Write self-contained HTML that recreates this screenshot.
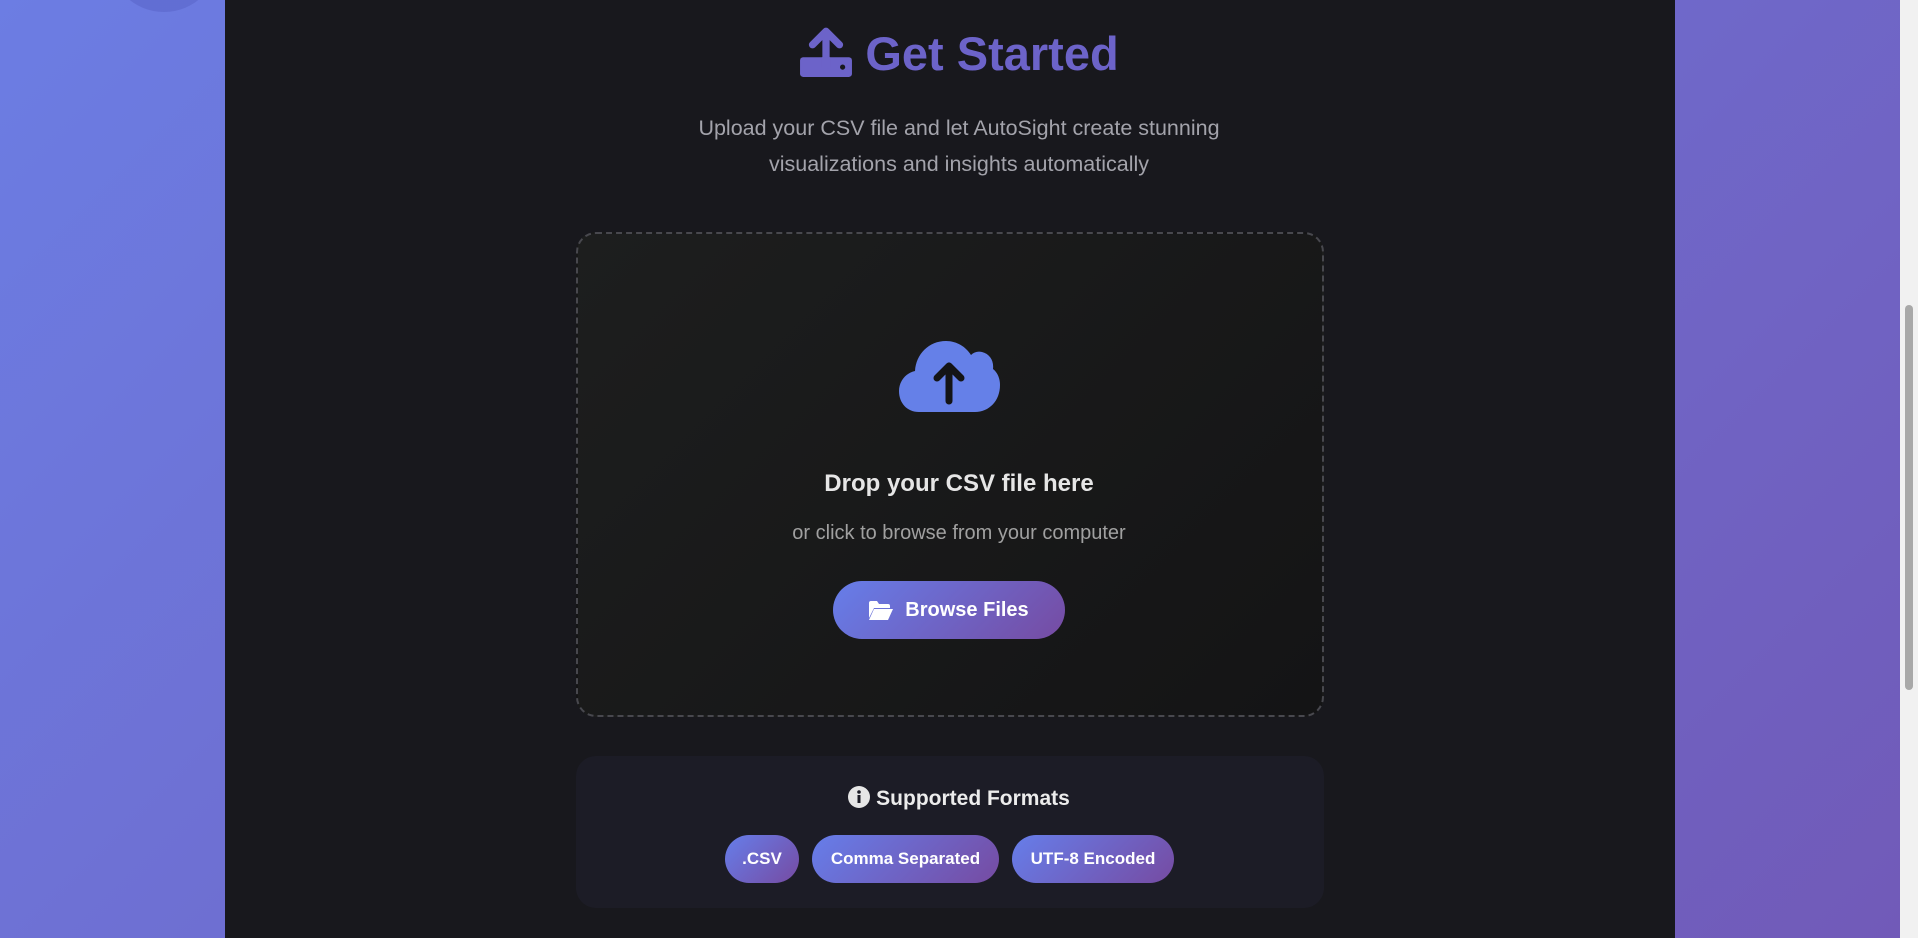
<!DOCTYPE html>
<html><head><meta charset="utf-8"><style>
*{margin:0;padding:0;box-sizing:border-box}
html,body{width:1918px;height:938px;overflow:hidden;font-family:"Liberation Sans","DejaVu Sans",sans-serif}
body{background:linear-gradient(135deg,#6c7de3 0%,#715ab8 100%);position:relative}
.circ{position:absolute;left:109px;top:-98px;width:110px;height:110px;border-radius:50%;background:rgba(90,100,200,.55)}
.card{position:absolute;left:225px;top:0;width:1450px;height:938px;background:#18181d}
.sb{position:absolute;left:1900px;top:0;width:18px;height:938px;background:#f1f1f1}
.sb i{position:absolute;left:5px;top:305px;width:8px;height:385px;border-radius:4px;background:#a8a8a8}
.title{position:absolute;left:0;width:1918px;top:22px;text-align:center;color:#6c63c9;font-weight:bold;font-size:47px;line-height:64px}
.title svg{vertical-align:-8px;margin-right:12px}
.sub{position:absolute;left:0;width:1918px;top:110px;text-align:center;color:#a3a3ab;font-size:21.5px;line-height:36px}
.drop{position:absolute;left:576px;top:232px;width:748px;height:485px;border:2px dashed #48484e;border-radius:20px;background:linear-gradient(135deg,#1d1e1e,#141415)}
.h{position:absolute;left:0;width:1918px;top:470px;text-align:center;color:#e6e6e6;font-weight:bold;font-size:24px}
.s{position:absolute;left:0;width:1918px;top:522px;text-align:center;color:#a0a0a0;font-size:20px}
.btn{position:absolute;left:833px;top:581px;width:232px;height:58px;border-radius:29px;background:linear-gradient(135deg,#667eea,#764ba2);color:#fff;font-weight:bold;font-size:20px;display:flex;align-items:center;justify-content:center;gap:12px}
.fmt{position:absolute;left:576px;top:756px;width:748px;height:152px;border-radius:20px;background:#1c1c26}
.fh{position:absolute;left:0;width:1918px;top:786px;text-align:center;color:#ececec;font-weight:bold;font-size:21px}
.fh svg{vertical-align:-3px;margin-right:6px}
.chip{position:absolute;top:835px;height:48px;border-radius:24px;background:linear-gradient(135deg,#667eea,#764ba2);color:#fff;font-weight:bold;font-size:17px;display:flex;align-items:center;justify-content:center}
</style></head><body>
<div class="circ"></div>
<div class="card"></div>
<div class="sb"><i></i></div>
<div class="title"><svg width="54" height="54" viewBox="0 0 52 52"><rect x="1" y="32" width="50" height="19" rx="3" fill="#6c63c9"/><circle cx="42" cy="41.5" r="2.5" fill="#18181d"/><path d="M26 40V8M13 20L26 7 39 20" stroke="#6c63c9" stroke-width="7" fill="none" stroke-linecap="round" stroke-linejoin="round"/><rect x="22" y="32" width="8" height="10" fill="#6c63c9"/></svg>Get Started</div>
<div class="sub">Upload your CSV file and let AutoSight create stunning<br>visualizations and insights automatically</div>
<div class="drop"></div>
<svg style="position:absolute;left:899px;top:341px" width="101" height="71" viewBox="0 0 101 71"><path d="M20 71C8 71 0 62 0 50c0-10 7-18 16-20C17 13 30 0 47 0c11 0 20 6 25 14 3-3 7-4 11-3 8 2 12 9 11 17 5 4 7 10 7 16 0 16-11 27-25 27z" fill="#6580e8"/><path d="M50 60V25M38 37l12-12 12 12" stroke="#141416" stroke-width="7" fill="none" stroke-linecap="round" stroke-linejoin="round"/></svg>
<div class="h">Drop your CSV file here</div>
<div class="s">or click to browse from your computer</div>
<div class="btn"><svg width="24" height="19" viewBox="0 0 24 19"><path d="M0 2a2 2 0 012-2h6l2 3h9a2 2 0 012 2v2H5L0 17z" fill="#fff"/><path d="M5 8h19l-5 11H0z" fill="#fff"/></svg>Browse Files</div>
<div class="fmt"></div>
<div class="fh"><svg width="22" height="22" viewBox="0 0 22 22"><circle cx="11" cy="11" r="11" fill="#e6e6e6"/><rect x="9.5" y="9" width="3" height="8" fill="#1c1c26"/><circle cx="11" cy="6" r="1.8" fill="#1c1c26"/></svg>Supported Formats</div>
<div class="chip" style="left:725px;width:74px">.CSV</div>
<div class="chip" style="left:812px;width:187px">Comma Separated</div>
<div class="chip" style="left:1012px;width:162px">UTF-8 Encoded</div>
</body></html>
